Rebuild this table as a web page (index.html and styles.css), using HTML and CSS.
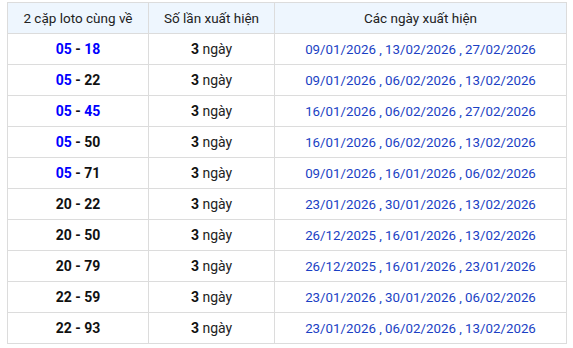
FILE: index.html
```html
<!DOCTYPE html>
<html lang="vi">
<head>
<meta charset="utf-8">
<link rel="stylesheet" href="styles.css">
</head>
<body>
<table class="tbl">
  <thead>
    <tr><th class="c1">2 cặp loto cùng về</th><th class="c2">Số lần xuất hiện</th><th class="c3">Các ngày xuất hiện</th></tr>
  </thead>
  <tbody>
    <tr><td><span class="hl">05</span> - <span class="hl">18</span></td><td><b>3</b> ngày</td><td class="dates">09/01/2026 , 13/02/2026 , 27/02/2026</td></tr>
    <tr><td><span class="hl">05</span> - 22</td><td><b>3</b> ngày</td><td class="dates">09/01/2026 , 06/02/2026 , 13/02/2026</td></tr>
    <tr><td><span class="hl">05</span> - <span class="hl">45</span></td><td><b>3</b> ngày</td><td class="dates">16/01/2026 , 06/02/2026 , 27/02/2026</td></tr>
    <tr><td><span class="hl">05</span> - 50</td><td><b>3</b> ngày</td><td class="dates">16/01/2026 , 06/02/2026 , 13/02/2026</td></tr>
    <tr><td><span class="hl">05</span> - 71</td><td><b>3</b> ngày</td><td class="dates">09/01/2026 , 16/01/2026 , 06/02/2026</td></tr>
    <tr><td>20 - 22</td><td><b>3</b> ngày</td><td class="dates">23/01/2026 , 30/01/2026 , 13/02/2026</td></tr>
    <tr><td>20 - 50</td><td><b>3</b> ngày</td><td class="dates">26/12/2025 , 16/01/2026 , 13/02/2026</td></tr>
    <tr><td>20 - 79</td><td><b>3</b> ngày</td><td class="dates">26/12/2025 , 16/01/2026 , 23/01/2026</td></tr>
    <tr><td>22 - 59</td><td><b>3</b> ngày</td><td class="dates">23/01/2026 , 30/01/2026 , 06/02/2026</td></tr>
    <tr><td>22 - 93</td><td><b>3</b> ngày</td><td class="dates">23/01/2026 , 06/02/2026 , 13/02/2026</td></tr>
  </tbody>
</table>
</body>
</html>
```
FILE: styles.css
```css
html, body { margin: 0; padding: 0; background: #fff; }
body { padding: 2px 0 0 7px; font-family: Roboto, "Liberation Sans", sans-serif; font-size: 14px; color: #222; }
.tbl { border-collapse: collapse; width: 560px; table-layout: fixed; }
.tbl th, .tbl td { border: 1px solid #dcdcdc; height: 30px; padding: 0; text-align: center; vertical-align: middle; }
.tbl th { background: #eef6fe; font-weight: normal; color: #222; font-size: 13.5px; }
.c1 { width: 140px; }
.c2 { width: 125px; }
.tbl td:first-child { font-weight: bold; color: #111; }
.hl { color: #0000ff; }
.tbl td b { font-weight: bold; color: #111; }
.dates { color: #1a3fc4; font-size: 13.3px; }
```
